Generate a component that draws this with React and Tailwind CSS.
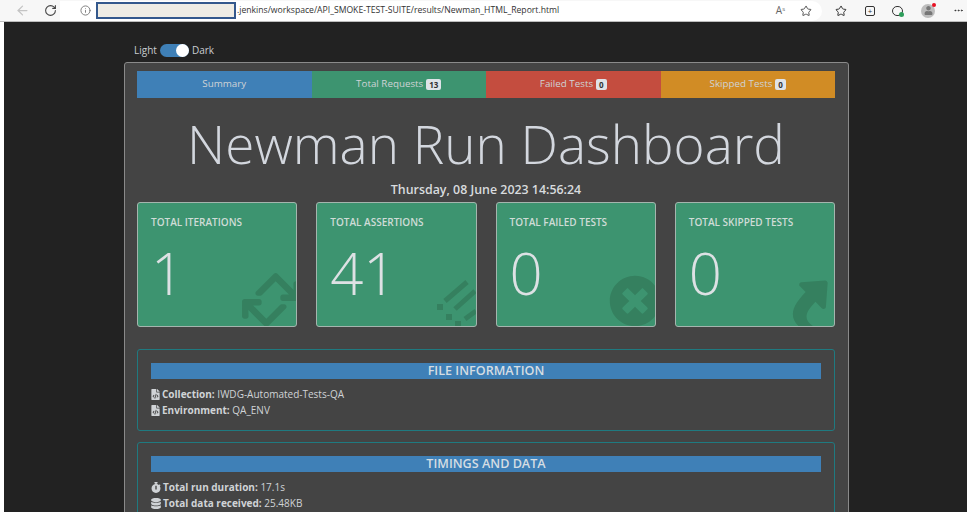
import React from 'react';
import { ArrowLeft, RotateCw, Info, Star, MoreHorizontal } from 'lucide-react';
import { FaRetweet, FaTimesCircle, FaShare, FaFileCode, FaStopwatch, FaDatabase, FaUser } from 'react-icons/fa';

const font = { fontFamily: '"Open Sans", "Noto Sans", sans-serif' };

const Tab = ({ label, count, color }) => (
  <div className={`flex-1 flex items-center justify-center gap-[3px] text-[9.8px] text-[#cfd3d6] ${color}`}>
    {label}
    {count !== undefined && (
      <span className="bg-[#dfe3e8] text-[#333] text-[8px] font-bold rounded-[2px] px-[3px] leading-[11px]">{count}</span>
    )}
  </div>
);

const StatCard = ({ title, value, icon }) => (
  <div className="relative overflow-hidden flex-1 h-[125px] bg-[#3d9470] border border-[#a5b5ae] rounded-[3px] pl-[13px] pt-[11px]">
    <div className="text-[10px] font-semibold leading-[16px] text-[#cfdcd7]">{title}</div>
    <div className="text-[58px] font-light leading-[80px] mt-[3px] text-[#dde1e4]">{value}</div>
    {icon}
  </div>
);

const Section = ({ title, children, height }) => (
  <div className={`border border-[#1f7a80] rounded-[3px] px-[13px] pt-[13px] ${height}`}>
    <div className="bg-[#3f80b7] h-[16px] flex items-center justify-center text-[12.6px] font-semibold text-[#d5dde3]">{title}</div>
    <div className="mt-[7px] text-[10px] leading-[16px] text-[#d0d3d6]">{children}</div>
  </div>
);

const Row = ({ icon, label, value }) => (
  <div className="flex items-center gap-[2px]">
    {icon}
    <span><b className="font-bold">{label}</b> {value}</span>
  </div>
);

// diagonal checklist mark on the assertions card
const AssertionsIcon = () => (
  <svg className="absolute right-0 bottom-0 w-[42px] h-[46px] text-[#35805f]" viewBox="0 0 42 46" fill="none" stroke="currentColor" strokeWidth="5">
    <path d="M11 21 33 2M21 29 41 11M31 39 42 31" />
    <path d="M6 27h.01M15 37h.01M24 44h.01" strokeWidth="6" strokeLinecap="square" />
  </svg>
);

export default function App() {
  return (
    <div className="h-[512px] w-[967px] overflow-hidden bg-white flex flex-col" style={font}>
      {/* browser toolbar */}
      <div className="h-[22px] shrink-0 flex items-center bg-[#f7f7f7] border-b border-[#bdbdbd]">
        <ArrowLeft className="w-[15px] h-[15px] ml-[15px] text-[#c4c4c4]" />
        <RotateCw className="w-[13px] h-[13px] ml-[14px] text-[#444]" />
        <div className="w-[762px] flex items-center h-[20px] ml-[3px] bg-white rounded-r-full pl-[20px]">
          <Info className="w-[11px] h-[11px] text-[#777]" />
          <div className="w-[140px] h-[17px] ml-[5px] bg-[#efece4] border-2 border-[#34588c]" />
          <span className="text-[8.65px] text-[#333] ml-[1px]">.jenkins/workspace/API_SMOKE-TEST-SUITE/results/Newman_HTML_Report.html</span>
          <span className="ml-auto text-[10px] text-[#666]">A<sup className="text-[6px]">s</sup></span>
          <Star className="w-[12px] h-[12px] ml-[15px] mr-[10px] text-[#555]" />
        </div>
        <Star className="w-[12px] h-[12px] ml-[13px] text-[#333]" />
        <div className="w-[10px] h-[10px] ml-[18px] border border-[#333] rounded-[2px] flex items-center justify-center text-[8px] leading-none text-[#333]">+</div>
        <div className="relative ml-[17px] w-[11px] h-[10px] border border-[#333] rounded-full">
          <span className="absolute -right-[2px] -bottom-[2px] w-[5px] h-[5px] rounded-full bg-[#2e9e5b]" />
        </div>
        <div className="relative ml-[18px] w-[14px] h-[14px] rounded-full bg-[#bdbdbd] flex items-center justify-center overflow-visible">
          <FaUser className="w-[9px] h-[9px] text-[#777]" />
          <span className="absolute -top-[1px] -right-[1px] w-[4px] h-[4px] rounded-full bg-[#e81123]" />
        </div>
        <MoreHorizontal className="w-[11px] h-[11px] ml-[18px] text-[#333]" />
      </div>

      {/* page */}
      <div className="flex-1 ml-[4px] bg-[#222222] pl-[120px] overflow-hidden">
        <div className="flex items-center h-[20px] mt-[18px] ml-[10px] text-[10px] text-[#c9cdd1]">
          Light
          <div className="w-[29px] h-[13px] mx-[3px] rounded-full bg-[#3f80b7] flex justify-end">
            <div className="w-[13px] h-[13px] rounded-full bg-white" />
          </div>
          Dark
        </div>

        <div className="w-[725px] mt-[2px] bg-[#444444] border border-[#8a8a8a] rounded-[3px] pl-[12px] pr-[13px] pt-[8px] pb-4">
          <div className="flex h-[27px]">
            <Tab label="Summary" color="bg-[#3f80b7]" />
            <Tab label="Total Requests" count="13" color="bg-[#3d9470]" />
            <Tab label="Failed Tests" count="0" color="bg-[#c44d3f]" />
            <Tab label="Skipped Tests" count="0" color="bg-[#d18c25]" />
          </div>

          <h1 className="text-center text-[53px] font-light leading-[68px] mt-[12px] text-[#d3d7de]">Newman Run Dashboard</h1>
          <div className="text-center text-[12.4px] font-semibold leading-[18px] mt-[3px] text-[#d8dbde]">Thursday, 08 June 2023 14:56:24</div>

          <div className="grid grid-cols-4 gap-[19px] mt-[3px]">
            <StatCard title="TOTAL ITERATIONS" value="1"
              icon={<FaRetweet className="absolute w-[66px] h-[66px] right-[-8px] bottom-[-7px] -rotate-45 text-[#35805f]" />} />
            <StatCard title="TOTAL ASSERTIONS" value="41" icon={<AssertionsIcon />} />
            <StatCard title="TOTAL FAILED TESTS" value="0"
              icon={<FaTimesCircle className="absolute w-[52px] h-[52px] right-[-6px] bottom-[-1px] text-[#35805f]" />} />
            <StatCard title="TOTAL SKIPPED TESTS" value="0"
              icon={<FaShare className="absolute w-[52px] h-[52px] right-[-4px] bottom-[-3px] -rotate-45 text-[#35805f]" />} />
          </div>

          <div className="flex flex-col gap-[11px] mt-[22px]">
            <Section title="FILE INFORMATION" height="h-[82px]">
              <Row icon={<FaFileCode className="w-[9px] h-[11px] text-[#d0d3d6]" />} label="Collection:" value="IWDG-Automated-Tests-QA" />
              <Row icon={<FaFileCode className="w-[9px] h-[11px] text-[#d0d3d6]" />} label="Environment:" value="QA_ENV" />
            </Section>
            <Section title="TIMINGS AND DATA" height="h-[120px]">
              <Row icon={<FaStopwatch className="w-[10px] h-[11px] text-[#d0d3d6]" />} label="Total run duration:" value="17.1s" />
              <Row icon={<FaDatabase className="w-[10px] h-[11px] text-[#d0d3d6]" />} label="Total data received:" value="25.48KB" />
            </Section>
          </div>
        </div>
      </div>
    </div>
  );
}
